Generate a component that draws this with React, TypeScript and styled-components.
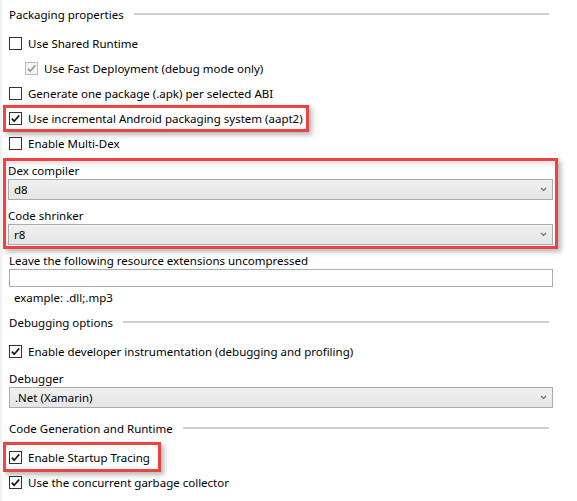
import React from "react";
import styled, { createGlobalStyle } from "styled-components";

const Global = createGlobalStyle`
  html, body { margin: 0; padding: 0; background: #ffffff; }
  body {
    font-family: "Noto Sans", "Open Sans", sans-serif;
    font-size: 11.5px;
    color: #000000;
  }
`;

const Page = styled.div`
  width: 577px;
  height: 501px;
  box-sizing: border-box;
  padding: 0 24px 0 7px;
  border-left: 2px solid #f2f2f2;
  display: flex;
  flex-direction: column;
  overflow: hidden;
`;

const SectionHeader = styled.div<{ $top: number }>`
  display: flex;
  align-items: center;
  gap: 10px;
  height: 20px;
  margin-top: ${(p) => p.$top}px;
  margin-bottom: 7px;
  margin-right: 4px;
  white-space: nowrap;
  &::after {
    content: "";
    flex: 1;
    height: 2px;
    background: #cfcfcf;
    margin-top: -1px;
  }
`;

const Row = styled.div<{ $indent?: number; $top?: number }>`
  display: flex;
  align-items: center;
  gap: 6px;
  height: 25px;
  margin-top: ${(p) => p.$top ?? 0}px;
  padding-left: ${(p) => p.$indent ?? 0}px;
  white-space: nowrap;
`;

const Marked = styled.div<{ $h: number; $pr: number; $my: number }>`
  display: flex;
  align-items: center;
  gap: 6px;
  width: fit-content;
  height: ${(p) => p.$h}px;
  margin: ${(p) => p.$my}px 0 ${(p) => p.$my}px -3px;
  padding: 0 ${(p) => p.$pr}px 0 3px;
  white-space: nowrap;
  box-shadow: 0 0 0 3px #ec4343, 3px 3px 5px 3px rgba(0, 0, 0, 0.28);
`;

const MarkedGroup = styled.div`
  display: flex;
  flex-direction: column;
  margin: 5px -2px 0 -3px;
  padding: 0 2px 1px 2px;
  box-shadow: 0 0 0 3px #ec4343, 3px 3px 5px 3px rgba(0, 0, 0, 0.28),
    inset 1px 3px 4px rgba(0, 0, 0, 0.12);
`;

const Box = styled.span<{ $disabled?: boolean }>`
  width: 13px;
  height: 13px;
  box-sizing: border-box;
  flex: none;
  border: 1px solid ${(p) => (p.$disabled ? "#bcbcbc" : "#333333")};
  background: ${(p) => (p.$disabled ? "#f4f4f4" : "#ffffff")};
  display: flex;
  align-items: center;
  justify-content: center;
`;

const Label = styled.div<{ $top?: number }>`
  height: 18px;
  display: flex;
  align-items: center;
  margin-top: ${(p) => p.$top ?? 0}px;
  white-space: nowrap;
`;

const Select = styled.div`
  height: 21px;
  box-sizing: border-box;
  border: 1px solid #acacac;
  background: linear-gradient(#f0f0f0, #e5e5e5);
  display: flex;
  align-items: center;
  justify-content: space-between;
  padding: 0 5px 0 5px;
`;

const TextInput = styled.div`
  height: 18px;
  box-sizing: border-box;
  border: 1px solid #abadb3;
  background: #ffffff;
`;

const Hint = styled.div`
  height: 20px;
  display: flex;
  align-items: center;
  padding-left: 5px;
`;

const Check = ({ checked, disabled }: { checked?: boolean; disabled?: boolean }) => (
  <Box $disabled={disabled}>
    {checked && (
      <svg width="11" height="11" viewBox="0 0 11 11">
        <polyline
          points="1.8,5.6 4.2,8.2 9.2,2.4"
          fill="none"
          stroke={disabled ? "#9a9a9a" : "#1a1a1a"}
          strokeWidth="1.7"
        />
      </svg>
    )}
  </Box>
);

const Chevron = () => (
  <svg width="7" height="5" viewBox="0 0 7 5">
    <polyline points="1,1 3.5,3.5 6,1" fill="none" stroke="#6b6b6b" strokeWidth="1.2" />
  </svg>
);

const Dropdown = ({ value }: { value: string }) => (
  <Select>
    <span>{value}</span>
    <Chevron />
  </Select>
);

export default function App() {
  return (
    <>
      <Global />
      <Page>
        <SectionHeader $top={4}>Packaging properties</SectionHeader>
        <Row>
          <Check />
          <span>Use Shared Runtime</span>
        </Row>
        <Row $indent={16}>
          <Check checked disabled />
          <span>Use Fast Deployment (debug mode only)</span>
        </Row>
        <Row>
          <Check />
          <span>Generate one package (.apk) per selected ABI</span>
        </Row>
        <Marked $h={21} $pr={3} $my={2}>
          <Check checked />
          <span>Use incremental Android packaging system (aapt2)</span>
        </Marked>
        <Row>
          <Check />
          <span>Enable Multi-Dex</span>
        </Row>
        <MarkedGroup>
          <Label>Dex compiler</Label>
          <Dropdown value="d8" />
          <Label $top={6}>Code shrinker</Label>
          <Dropdown value="r8" />
        </MarkedGroup>
        <Label $top={5}>Leave the following resource extensions uncompressed</Label>
        <TextInput />
        <Hint>example: .dll;.mp3</Hint>
        <SectionHeader $top={5}>Debugging options</SectionHeader>
        <Row>
          <Check checked />
          <span>Enable developer instrumentation (debugging and profiling)</span>
        </Row>
        <Label $top={5}>Debugger</Label>
        <Dropdown value=".Net (Xamarin)" />
        <SectionHeader $top={10}>Code Generation and Runtime</SectionHeader>
        <Marked $h={24} $pr={8} $my={0}>
          <Check checked />
          <span>Enable Startup Tracing</span>
        </Marked>
        <Row $top={1}>
          <Check checked />
          <span>Use the concurrent garbage collector</span>
        </Row>
      </Page>
    </>
  );
}
